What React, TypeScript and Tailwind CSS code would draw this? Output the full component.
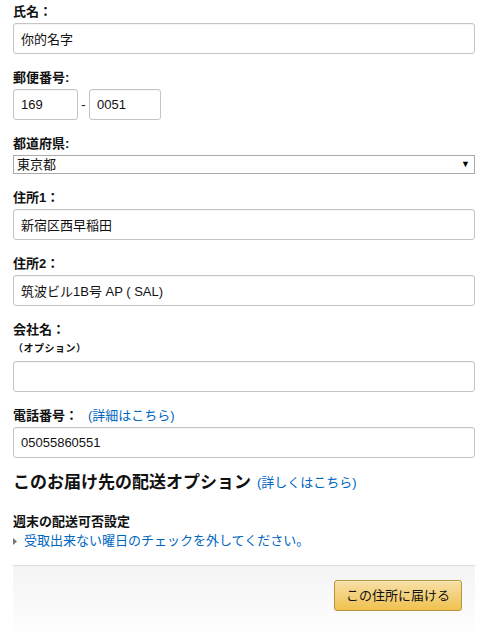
import React from 'react';

const font = { fontFamily: '"Liberation Sans", Arial, "Noto Sans CJK JP", sans-serif' };

function Label({ children }: { children: React.ReactNode }) {
  return <div className="h-[19px] text-[13px] leading-[19px] font-bold text-[#111] mb-[2px]">{children}</div>;
}

function TextInput({ value, className = '' }: { value?: string; className?: string }) {
  return (
    <input
      readOnly
      value={value ?? ''}
      className={`h-[31px] border border-[#c4c4c4] rounded-[3px] px-[7px] text-[13px] text-[#111] bg-white outline-none shadow-[inset_0_1px_0_rgba(0,0,0,0.04)] ${className}`}
      style={font}
    />
  );
}

export default function App() {
  return (
    <div className="min-h-[641px] bg-white pl-[13px] pr-[9px] pt-[2px] text-[#111]" style={font}>
      <Label>氏名：</Label>
      <TextInput value="你的名字" className="w-full" />

      <div className="mt-[14px]">
        <Label>郵便番号:</Label>
        <div className="flex items-center">
          <TextInput value="169" className="w-[65px]" />
          <span className="w-[11px] text-center text-[13px]">-</span>
          <TextInput value="0051" className="w-[72px]" />
        </div>
      </div>

      <div className="mt-[14px]">
        <Label>都道府県:</Label>
        <div className="mt-[1px] h-[19px] border border-[#a9a9a9] flex items-center justify-between pl-[3px] pr-[4px] text-[13px] leading-[17px]">
          <span>東京都</span>
          <span className="text-[9px] text-black">▼</span>
        </div>
      </div>

      <div className="mt-[14px]">
        <Label>住所1：</Label>
        <TextInput value="新宿区西早稲田" className="w-full" />
      </div>

      <div className="mt-[14px]">
        <Label>住所2：</Label>
        <TextInput value="筑波ビル1B号 AP ( SAL)" className="w-full" />
      </div>

      <div className="mt-[14px]">
        <div className="h-[19px] text-[13px] leading-[19px] font-bold">会社名：</div>
        <div className="h-[20px] text-[10px] leading-[20px] font-bold tracking-[0.5px]">（オプション）</div>
        <TextInput className="w-full mt-[2px]" />
      </div>

      <div className="mt-[14px]">
        <Label>
          電話番号：<span className="font-normal text-[#0066c0] ml-[10px]">(詳細はこちら)</span>
        </Label>
        <TextInput value="05055860551" className="w-full" />
      </div>

      <div className="mt-[11px] h-[27px] flex items-center">
        <span className="text-[17px] font-bold leading-[27px]">このお届け先の配送オプション</span>
        <span className="text-[13px] text-[#0066c0] ml-[6px]">(詳しくはこちら)</span>
      </div>

      <div className="mt-[16px] h-[19px] text-[13px] leading-[19px] font-bold">週末の配送可否設定</div>
      <div className="flex items-center h-[20px] text-[13px] text-[#0066c0]">
        <svg width="4" height="7" viewBox="0 0 4 7" className="mr-[7px]">
          <path d="M0 0 L4 3.5 L0 7 Z" fill="#777" />
        </svg>
        受取出来ない曜日のチェックを外してください。
      </div>

      <div className="mt-[14px] min-h-[75px] border-t border-[#dddddd] bg-gradient-to-b from-[#f4f4f4] to-white flex justify-end pt-[14px] pr-[13px]">
        <button
          className="h-[31px] w-[128px] rounded-[3px] border border-[#b8943a] bg-gradient-to-b from-[#f7dfa5] to-[#f0c14b] text-[13px] text-[#111] shadow-[inset_0_1px_0_rgba(255,255,255,0.4)]"
          style={font}
        >
          この住所に届ける
        </button>
      </div>
    </div>
  );
}
